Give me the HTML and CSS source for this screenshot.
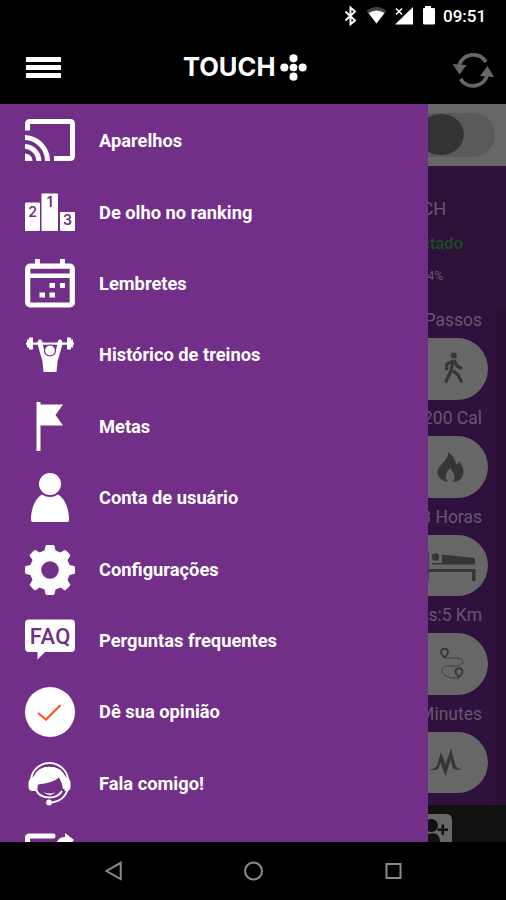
FILE: index.html
```html
<!DOCTYPE html>
<html lang="pt-BR">
<head>
<meta charset="utf-8">
<title>Touch+</title>
<link rel="stylesheet" href="styles.css">
</head>
<body>
<div class="screen">
  <div class="status">
    <svg class="status-icons" viewBox="340 0 100 32" fill="#fff">
      <path d="M345.500 11.500L355 20.500L350.500 24.300V7.500L355 11.500L345.500 20.500" fill="none" stroke="#fff" stroke-width="1.900"/>
      <path d="M366.500 11Q376.500 3 386.500 11L376.500 23.500Z" fill="#444"/>
      <path d="M368.500 13Q376.500 8 384.500 13L376.500 23.500Z"/>
      <path d="M395 24.500L413 7V24.500Z"/>
      <path d="M396 8.500L402 14.500M402 8.500L396 14.500" stroke="#fff" stroke-width="1.500"/>
      <path d="M425 6h6v2h3q1 0 1 1v14q0 1.500-1.500 1.500h-9q-1.500 0-1.500-1.500V9q0-1 1-1h1z"/>
    </svg>
    <span class="clock">09:51</span>
  </div>
  <header class="header">
    <div class="burger"><i></i><i></i><i></i></div>
    <div class="brand"><span>TOUCH</span>
      <svg class="dots" viewBox="0 0 28 28" fill="#fff"><circle cx="14" cy="4.500" r="4.200"/><circle cx="4.500" cy="14" r="4.200"/><circle cx="14" cy="14" r="4"/><circle cx="23.500" cy="14" r="4.200"/><circle cx="14" cy="23.500" r="4.200"/></svg>
    </div>
    <svg class="sync" viewBox="452 51 42 38">
      <g fill="none" stroke="#666" stroke-width="3.800"><path d="M459.300 65A14.800 14.800 0 0 1 486 62"/><path d="M487.300 75A14.800 14.800 0 0 1 460.500 79"/></g>
      <path d="M452.500 64L466.500 65L459.500 74.500ZM480 76L487.500 66L494 77Z" fill="#666"/>
    </svg>
  </header>
  <div class="content">
    <nav class="drawer">
      <div class="item"><svg viewBox="0 0 50 50"><g fill="none" stroke="#fff" stroke-width="5"><path d="M2.500 14.500V8q0-2.500 2.500-2.500h40q2.500 0 2.500 2.500v32q0 2.500-2.500 2.500H29"/><path d="M0 21.500A23.500 23.500 0 0 1 22.500 45M0 30.500A14.500 14.500 0 0 1 13.800 45"/></g><path d="M0 37.500Q7 38 7.500 45H0z"/></svg><span>Aparelhos</span></div>
      <div class="item"><svg viewBox="0 0 50 50"><rect y="14.500" width="15" height="28.500" rx="1"/><rect x="16.500" y="5.500" width="16.500" height="37.500" rx="1"/><rect x="35" y="24" width="15" height="19" rx="1"/><g class="cut place"><text x="7.500" y="28.700">2</text><text x="24.700" y="19.200">1</text><text x="42.500" y="37.300">3</text></g></svg><span>De olho no ranking</span></div>
      <div class="item"><svg viewBox="0 0 50 50"><rect x="2.700" y="7.200" width="44.600" height="38.800" rx="2.500" fill="none" stroke="#fff" stroke-width="5.200"/><path d="M3 14.500h44v4.500H3zM10 0h5v7h-5zM35 0h5v7h-5zM24.500 24h5.500v5h-5.500zM35 24h5v5h-5zM14.500 33.500H20v5h-5.500zM24.500 33.500H30v5h-5.500z"/></svg><span>Lembretes</span></div>
      <div class="item"><svg viewBox="0 0 50 50"><path d="M1 12.500h48v2.200H1zM2 9.500h2v8H2zM4 7.500h4v12H4zM42 7.500h4v12h-4zM46 9.500h2v8h-2z"/><path d="M12.500 14Q12.500 9.500 15 9.500T17.500 14L20 23Q25 26 30 23L32.500 14Q32.500 9.500 35 9.500T37.500 14L32.500 31.500L31.500 42H18.500L17.500 31.500Z"/><circle cx="25" cy="20.500" r="5.500" stroke="#722f88" stroke-width="1.200"/></svg><span>Histórico de treinos</span></div>
      <div class="item"><svg viewBox="0 0 50 50"><path d="M11.500 0h4v49h-4zM15.500 2.500H38L30.500 13L38 23.500H15.500z"/></svg><span>Metas</span></div>
      <div class="item"><svg viewBox="0 0 50 50"><circle cx="25" cy="11" r="11"/><path d="M17 21.500Q25 26.500 33 21.500C39 25 44 34 44 47q0 2-2 2H8q-2 0-2-2C6 34 11 25 17 21.500z"/></svg><span>Conta de usuário</span></div>
      <div class="item"><svg viewBox="0 0 50 50"><path fill-rule="evenodd" d="M19.500 5.500L20.500 1q.3-1 1.500-1h6q1.200 0 1.500 1l1 4.500 5 2L39 5.200q1-.7 2 .3l3.800 3.800q1 1 .2 2L42.500 15l2 5 4.500 1q1 .3 1 1.500v5q0 1.200-1 1.500l-4.500 1-2 5 2.500 4q.7 1-.3 2L41 44.800q-1 1-2 .2l-3.500-2.500-5 2-1 4.500q-.3 1-1.500 1h-6q-1.200 0-1.500-1l-1-4.500-5-2L11 45q-1 .7-2-.2L5.300 41q-1-1-.3-2l2.500-4-2-5L1 29q-1-.3-1-1.500v-5Q0 21.300 1 21l4.500-1 2-5L5 11.300q-.8-1 .2-2L9 5.500q1-1 2-.3l3.500 2.300zM25 16.200a8.800 8.800 0 1 0 0 17.600a8.800 8.800 0 1 0 0-17.600z"/></svg><span>Configurações</span></div>
      <div class="item"><svg viewBox="0 0 50 50"><path d="M4 3.500h42q4 0 4 4V32q0 4-4 4H20l-7.500 7.500V36H4q-4 0-4-4V7.500q0-4 4-4z"/><text class="cut faq" x="25.300" y="27.600">FAQ</text></svg><span>Perguntas frequentes</span></div>
      <div class="item"><svg viewBox="0 0 50 50"><circle cx="25" cy="25" r="25"/><path d="M13 26L21 32.500L35.500 18" fill="none" stroke="#f15a24" stroke-width="2.200"/></svg><span>Dê sua opinião</span></div>
      <div class="item"><svg viewBox="0 0 50 50"><path d="M6 20A18.700 18.700 0 0 1 43 20M42.500 31Q38 43.500 24 43.500M10.500 29Q13 38.500 24.500 38.500Q33 38.500 37 32" fill="none" stroke="#fff" stroke-width="2"/><path d="M8 18Q12 7.500 24.500 7.500T41 18V30H38Q37 23 34 18.500Q28 24 13 25.500L12 32H7Q3.500 31.500 3.500 27.500V24Q3.500 20 8 18zM40 18q5.500 1 5.500 6v4q0 4-4 4h-2z"/><path d="M8.500 16Q13 7 24.500 7T40.500 16" fill="none" stroke="#722f88" stroke-width="1.200"/><path d="M18.500 33Q25 36 30.500 33Q25 39.500 18.500 33z"/><circle cx="24" cy="43.500" r="2.900"/></svg><span>Fala comigo!</span></div>
      <div class="item"><svg viewBox="0 0 50 50"><path d="M2.500 12V8q0-2 2-2H28" fill="none" stroke="#fff" stroke-width="5" stroke-linecap="round"/><path d="M32 12q2-5 8-5V3l9 7-4 5z"/></svg></div>
    </nav>
    <main class="panel">
      <div class="toggle-bar"><div class="toggle"><i></i></div></div>
      <div class="device">
        <p class="name">CH</p><p class="state">ctado</p><p class="battery">4%</p>
      </div>
      <section class="metrics">
        <div class="metric"><p>Passos</p><div class="pill"><svg viewBox="428 338 60 61"><circle cx="453.800" cy="355.500" r="3"/><path d="M453 360L451 371L445.500 382.500M453 371L458 375L462 382.500M453 361L447 364L446.500 370M454 360L457 366L462 368.500" fill="none" stroke="#363636" stroke-width="3.200"/></svg></div></div>
        <div class="metric"><p>200 Cal</p><div class="pill"><svg viewBox="428 436 60 61"><path d="M448 452C456 458 455 463 457 465Q459 463 459 461Q465 469 463 475Q461 481 453 482Q457 476 450 468Q443 476 448 482Q438 480 437.500 473C437 465 449 461 448 452z"/></svg></div></div>
        <div class="metric"><p>3 Horas</p><div class="pill"><svg viewBox="428 534.500 60 61"><circle cx="435.500" cy="556.500" r="3.700"/><path d="M442 554L475 557.500V564H432v-1.500h10zM428 568.500h47.500v12H472v-9H428zM428 551h.7v29h-.7z"/></svg></div></div>
        <div class="metric"><p>s:5 Km</p><div class="pill"><svg viewBox="428 633 60 61" fill="none" stroke="#363636"><path d="M444.500 657.500q-4-4-3.500-6a3.600 3.600 0 0 1 7 0q.5 2-3.500 6zM459 677q-4-4-3.500-6a3.600 3.600 0 0 1 7 0q.5 2-3.500 6z" stroke-width="1.800"/><path d="M446 658H458Q463 659 463 662T456 666H447Q442 667 442 671T451 678H459" stroke-width=".8"/></svg></div></div>
        <div class="metric"><p>Minutes</p><div class="pill"><svg viewBox="428 731.500 60 61"><path d="M429.500 769.500Q436 767.500 437 765L441 751.500L445.500 764L451 748L455.500 765Q457 767.500 462.500 769.500Q454 770 452.500 766.500L450.500 759L445.500 776L440.500 762L439 767Q437 770.500 429.500 769.500z"/></svg></div></div>
      </section>
      <footer class="tabs"><svg viewBox="428 814 24 28"><path d="M428 814h18q6 0 6 6v22h-24z" fill="#676767"/><circle cx="431.500" cy="825.500" r="6.500" fill="#111"/><path d="M428 834Q440 831 440 842H428zM437.500 828.500h4v-4h2.500v4h4v2.500h-4v4h-2.500v-4h-4z" fill="#111"/></svg></footer>
    </main>
  </div>
  <div class="navbar">
    <svg viewBox="104 860 300 22" fill="none" stroke="#8b8b8b" stroke-width="2"><path d="M120.700 862.800V879L106.500 871Z"/><circle cx="253.500" cy="871" r="8.500"/><rect x="386.500" y="864" width="14" height="14"/></svg>
  </div>
</div>
</body>
</html>
```
FILE: styles.css
```css
* { box-sizing: border-box; }
body { margin: 0; background: #000; font-family: Roboto, "Liberation Sans", sans-serif; }
p { margin: 0; }
svg { display: block; flex: none; }
.screen { width: 506px; height: 900px; display: flex; flex-direction: column; overflow: hidden; background: #000; }
.status { height: 32px; display: flex; align-items: center; justify-content: flex-end; padding-right: 20px; color: #fff; }
.status-icons { width: 100px; height: 32px; }
.clock { width: 46px; padding-left: 3px; font-size: 17px; font-weight: 500; line-height: 32px; white-space: nowrap; }
.header { height: 72px; display: flex; align-items: center; padding: 0 12px 2px 26px; }
.burger { width: 35px; display: flex; flex-direction: column; gap: 3px; }
.burger i { height: 5px; background: #fff; }
.brand { display: flex; align-items: center; width: 124px; margin: 0 auto 0 122px; color: #fff; }
.brand span { width: 97px; font: 700 25.5px/26px Inter, Roboto, sans-serif; }
.dots { width: 27px; height: 27px; }
.sync { width: 42px; height: 38px; margin-top: 6px; }
.content { height: 738px; display: grid; grid-template-columns: 428px 78px; overflow: hidden; }
.drawer { height: 738px; padding-top: 1.5px; overflow: hidden; background: #722f88; }
.item { height: 71.4px; display: flex; align-items: center; gap: 24px; padding-left: 25px; color: #fff; font-size: 18.3px; font-weight: 700; line-height: 20px; white-space: nowrap; }
.item svg { width: 50px; height: 50px; fill: #fff; }
.item .cut { fill: #722f88; text-anchor: middle; }
.place { font: 600 14px Inter, sans-serif; }
.faq { font: 500 22px Roboto, sans-serif; letter-spacing: .4px; }
.panel { height: 738px; display: flex; flex-direction: column; overflow: hidden; background: #2f123a; }
.toggle-bar { height: 62px; flex: none; display: flex; justify-content: flex-end; align-items: center; padding-right: 11px; background: #676767; }
.toggle { width: 88px; height: 44px; flex: none; border-radius: 22px; background: #5a5a5a; }
.toggle i { display: block; width: 46px; height: 41px; margin: 1px 0 0 11px; border-radius: 50%; background: #343434; }
.device { height: 143px; flex: none; display: flex; flex-direction: column; align-items: flex-end; padding-top: 31px; color: #69566e; }
.device p { white-space: nowrap; }
.name { padding-right: 60px; font-size: 18px; line-height: 24px; }
.state { padding: 12px 43px 0 0; color: #174f23; font-size: 16.5px; line-height: 22px; font-weight: 500; }
.battery { padding: 12px 63px 0 0; font-size: 12px; line-height: 18px; }
.metrics { height: 496px; flex: none; padding-right: 18px; background: linear-gradient(90deg, #2f113d 75%, #2b1035); }
.metric { height: 98.4px; display: flex; flex-direction: column; align-items: flex-end; }
.metric p { height: 29px; padding-right: 6px; color: #69566e; font-size: 17.5px; line-height: 22px; white-space: nowrap; }
.pill { width: 60px; height: 61.5px; border-radius: 0 31px 31px 0; background: #676767; }
.pill svg { width: 60px; height: 61px; }
.pill svg:not([fill]) { fill: #363636; }
.tabs { height: 37px; flex: none; padding-top: 9px; background: #111; }
.tabs svg { width: 24px; height: 28px; }
.navbar { height: 58px; display: flex; align-items: center; padding-left: 104px; }
.navbar svg { width: 300px; height: 22px; }
```
